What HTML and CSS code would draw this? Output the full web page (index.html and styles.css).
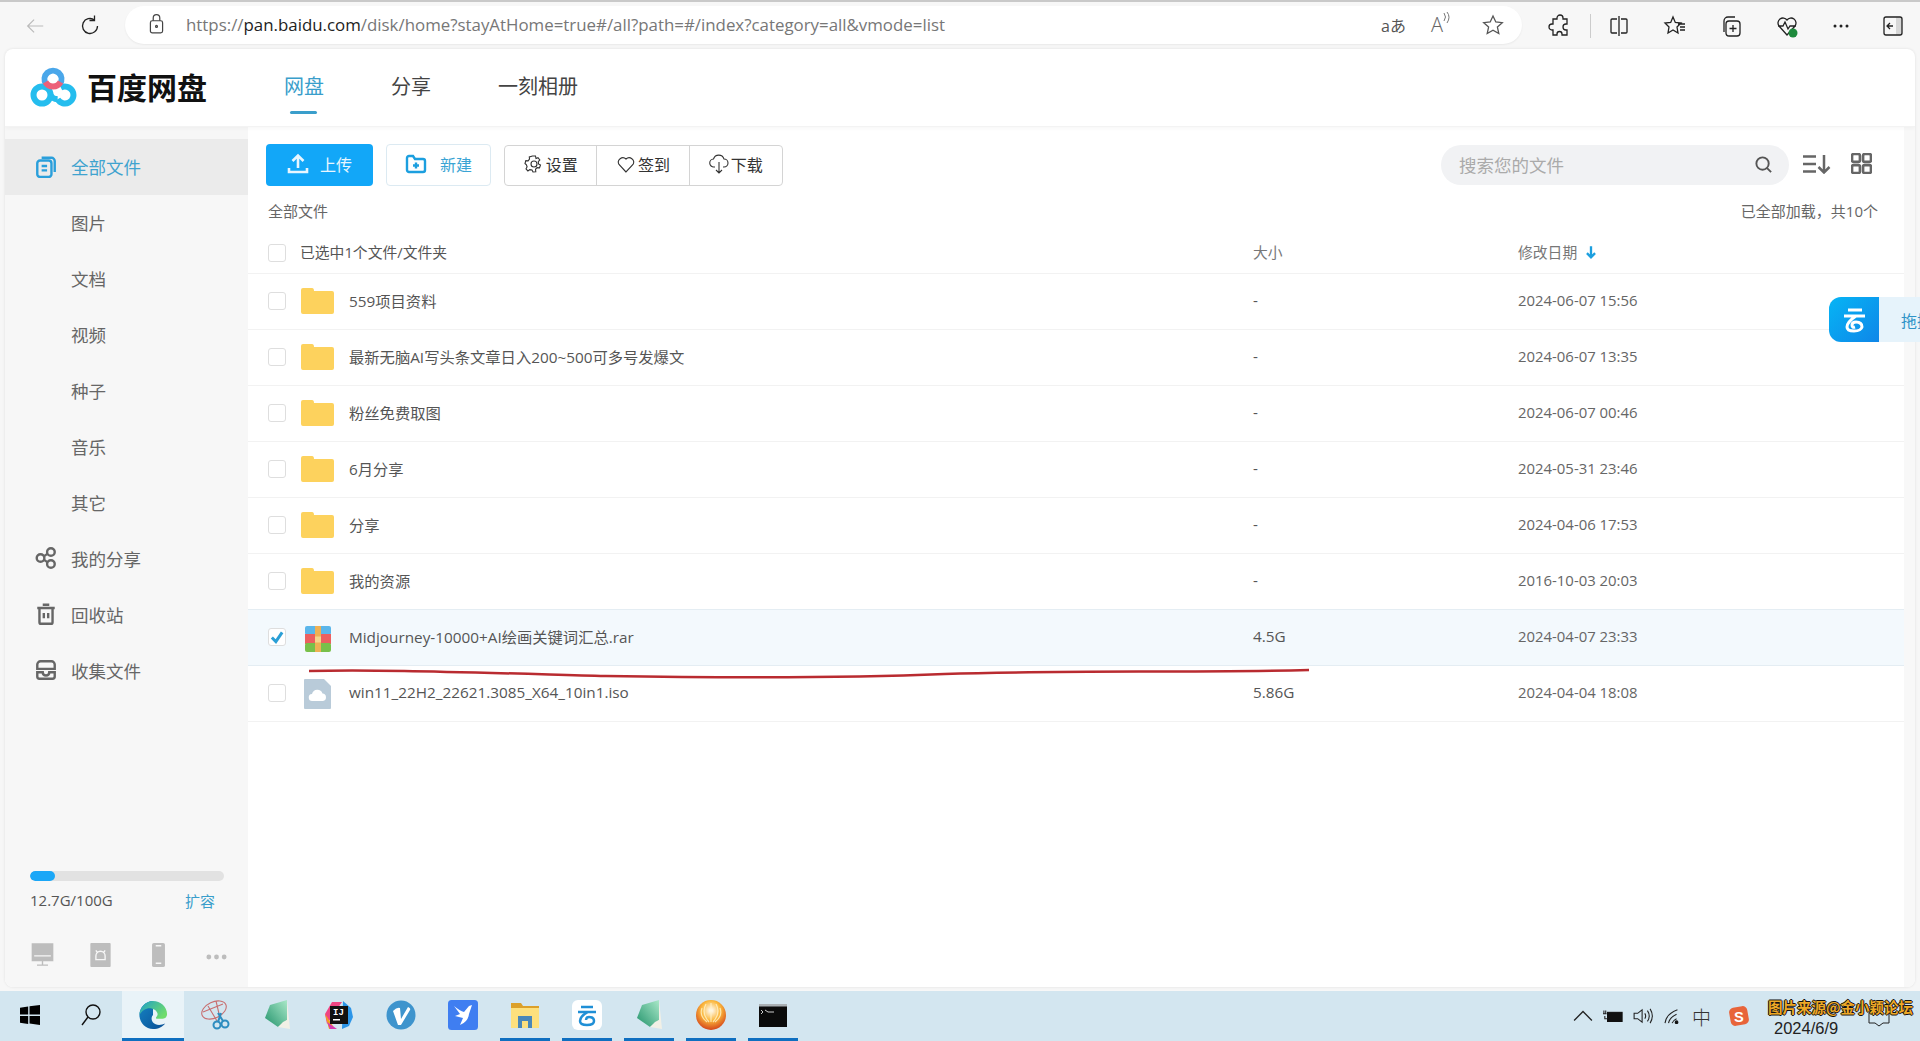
FILE: index.html
```html
<!DOCTYPE html>
<html lang="zh-CN">
<head>
<meta charset="utf-8">
<title>百度网盘</title>
<link rel="stylesheet" href="styles.css">
</head>
<body>
<div class="browser">
  <svg class="bicon back" viewBox="0 0 24 24"><path d="M21 12H4M11 5l-7 7 7 7"/></svg>
  <svg class="bicon reload" viewBox="0 0 24 24"><path d="M19.500 12a7.500 7.500 0 1 1-3-6M16.500 1.500V6.500H11.500"/></svg>
  <div class="address">
    <svg class="lock" viewBox="0 0 16 22"><rect x="1.500" y="7" width="13" height="13" rx="2"/><path d="M4.500 7V4a3.500 3.500 0 0 1 7 0v3"/><circle cx="8" cy="13" r="1"/></svg>
    <div class="url">https://<b>pan.baidu.com</b>/disk/home?stayAtHome=true#/all?path=#/index?category=all&amp;vmode=list</div>
    <div class="addr-tools">
      <span class="translate">aあ</span>
      <span class="read">A<svg viewBox="0 0 8 14"><path d="M1 2q3 4 0 8M4 1q4 5 0 11"/></svg></span>
      <svg class="bicon" viewBox="0 0 24 24"><path d="M12 3l2.800 6 6.500.7-4.900 4.400 1.400 6.400L12 17.200 6.200 20.500l1.400-6.400L2.700 9.700l6.500-.7z"/></svg>
    </div>
  </div>
  <div class="browser-tools">
    <svg class="bicon" viewBox="0 0 24 24"><path d="M9 4a3 3 0 0 1 6 0v1h4v5h-1a3 3 0 0 0 0 6h1v5h-5v-1a2.500 2.500 0 0 0-5 0v1H5v-5H4a3 3 0 0 1 0-6h1V5h4z"/></svg>
    <span class="tool-sep"></span>
    <svg class="bicon" viewBox="0 0 24 24"><path d="M12 2v20M10 5H5a1 1 0 0 0-1 1v12a1 1 0 0 0 1 1h5M14 5h5a1 1 0 0 1 1 1v12a1 1 0 0 1-1 1h-5"/></svg>
    <svg class="bicon" viewBox="0 0 24 24"><path d="M10 3l2.300 5.500L18 9l-4 4 1 6-5-3-5 3 1-6-4-4 5.700-.5zM17 13h5M17 16h5M15 10h7"/></svg>
    <svg class="bicon" viewBox="0 0 24 24"><rect x="7" y="7" width="14" height="15" rx="3"/><path d="M14 11v7M10.500 14.500h7M5 18V7a4 4 0 0 1 4-4h7"/></svg>
    <svg class="bicon health" viewBox="0 0 24 24"><path d="M12 21L4 12a5 5 0 0 1 8-6 5 5 0 0 1 8 6l-8 9zM3 12h5l2-4 3 7 2-3h6"/><circle class="ok" cx="18" cy="19" r="4.500"/></svg>
    <svg class="bicon dots" viewBox="0 0 24 24"><circle cx="6" cy="12" r="1.500"/><circle cx="12" cy="12" r="1.500"/><circle cx="18" cy="12" r="1.500"/></svg>
    <svg class="bicon" viewBox="0 0 24 24"><rect x="3" y="3" width="18" height="18" rx="2"/><rect class="fill" x="15" y="3.500" width="6" height="17"/><path d="M12 12H6M9 9l-3 3 3 3"/></svg>
  </div>
</div>

<div class="card">
  <header class="top">
    <div class="logo">
      <svg class="logo-mark" viewBox="0 0 48 40">
        <circle class="ring-a" cx="12" cy="28" r="8.500"/>
        <path class="ring-e" d="M27.600 32.300A8.500 8.500 0 1 0 30.800 20.600"/>
        <path class="ring-e" d="M20.500 28q2 4 7.100 4.300"/>
        <path class="ring-b" d="M16 17A8.500 8.500 0 1 1 30 17"/>
        <path class="ring-d" d="M15.500 15A8.500 8.500 0 0 0 30.500 15"/>
      </svg>
      <span class="logo-text">百度网盘</span>
    </div>
    <nav class="tabs">
      <a class="tab active">网盘</a>
      <a class="tab">分享</a>
      <a class="tab">一刻相册</a>
    </nav>
  </header>

  <div class="body">
    <aside class="side">
      <ul class="nav">
        <li class="nav-item current"><svg class="nicon" viewBox="0 0 20 22"><path d="M6 3.500h9a3 3 0 0 1 3 3v10M4.500 6h8a2.500 2.500 0 0 1 2.500 2.500v10a2.500 2.500 0 0 1-2.500 2.500h-8A2.500 2.500 0 0 1 2 18.500v-10A2.500 2.500 0 0 1 4.500 6zM6 11h5M6 15h5"/></svg><span>全部文件</span></li>
        <li class="nav-item"><span class="nav-sub">图片</span></li>
        <li class="nav-item"><span class="nav-sub">文档</span></li>
        <li class="nav-item"><span class="nav-sub">视频</span></li>
        <li class="nav-item"><span class="nav-sub">种子</span></li>
        <li class="nav-item"><span class="nav-sub">音乐</span></li>
        <li class="nav-item"><span class="nav-sub">其它</span></li>
        <li class="nav-item"><svg class="nicon grey" viewBox="0 0 22 22"><circle cx="6" cy="11" r="3.500"/><circle cx="15.500" cy="5.500" r="3.500"/><circle cx="15.500" cy="16.500" r="3.500"/><path d="M9 9.500l3.500-2.500M9 12.500l3.500 2.500"/></svg><span>我的分享</span></li>
        <li class="nav-item"><svg class="nicon grey" viewBox="0 0 22 22"><path d="M3 5.500h16M8 2.500h6M5 5.500h12v13a1.500 1.500 0 0 1-1.500 1.500h-9A1.500 1.500 0 0 1 5 18.500zM9 10v5M13 10v5"/></svg><span>回收站</span></li>
        <li class="nav-item"><svg class="nicon grey" viewBox="0 0 22 22"><path d="M3 10V6a3 3 0 0 1 3-3h10a3 3 0 0 1 3 3v4zM3 13h5q0 3 3 3t3-3h5v4a2 2 0 0 1-2 2H5a2 2 0 0 1-2-2z"/></svg><span>收集文件</span></li>
      </ul>
      <div class="storage">
        <div class="bar"><div class="bar-fill" style="width:13%"></div></div>
        <div class="storage-line"><span>12.7G/100G</span><a class="expand">扩容</a></div>
        <div class="devices">
          <svg class="dev" viewBox="0 0 24 26"><path d="M1 1h22v18H1zM12 19v5M6 24h12"/><path class="cut" d="M3 14h18"/></svg>
          <svg class="dev" viewBox="0 0 22 26"><rect x="0" y="0" width="22" height="26" rx="1"/><path class="cut" d="M6 18v-4a5 5 0 0 1 10 0v4zM6 8l2 3M16 8l-2 3"/></svg>
          <svg class="dev" viewBox="0 0 16 26"><rect x="1" y="0" width="14" height="26" rx="2"/><path class="cut" d="M5 3h6M5 22h6"/></svg>
          <svg class="dev more" viewBox="0 0 24 8"><circle cx="4" cy="4" r="2.500"/><circle cx="12" cy="4" r="2.500"/><circle cx="20" cy="4" r="2.500"/></svg>
        </div>
      </div>
    </aside>

    <main class="main">
      <div class="toolbar">
        <button class="btn primary"><svg class="btn-ico" viewBox="0 0 22 22"><path d="M11 15V3M5.500 8L11 2.500 16.500 8M2 15v4h18v-4" /></svg>上传</button>
        <button class="btn outline"><svg class="btn-ico" viewBox="0 0 22 22"><path d="M2 5a2 2 0 0 1 2-2h4l2 3h8a2 2 0 0 1 2 2v9a2 2 0 0 1-2 2H4a2 2 0 0 1-2-2zM11 9.500v6M8 12.500h6"/></svg>新建</button>
        <div class="group">
          <button class="gbtn"><svg class="g-ico" viewBox="0 0 20 20"><path d="M8.500 2h3l.5 2.500 2-.8 1.800 2.200-1.500 1.800.2 2.300 2 1-1 2.800-2.400-.2-1.600 1.700.3 2.400-2.800.3-1-2.100-2.200-.3L3.900 17 2 15l1.100-2.200-.7-2L1 9.500l.8-2.800 2.300.2L5.500 5l-.2-2z"/><circle cx="10" cy="10" r="3"/></svg>设置</button>
          <button class="gbtn"><svg class="g-ico" viewBox="0 0 20 20"><path d="M10 18L3 10.500a4.500 4.500 0 0 1 7-5.500 4.500 4.500 0 0 1 7 5.500z"/></svg>签到</button>
          <button class="gbtn"><svg class="g-ico" viewBox="0 0 20 20"><path d="M6 13H5a4 4 0 0 1-.5-8A5.500 5.500 0 0 1 15 5a4 4 0 0 1 0 8h-1M10 8v11M7 16l3 3 3-3"/></svg>下载</button>
        </div>
        <div class="tool-right">
          <div class="search">
            <span class="placeholder">搜索您的文件</span>
            <svg class="search-ico" viewBox="0 0 20 20"><circle cx="9" cy="9" r="6.500"/><path d="M13.500 13.500L18 18"/></svg>
          </div>
          <svg class="view-ico sort" viewBox="0 0 30 20"><path d="M1 2.500h13M1 10h13M1 17.500h13M22 1v17.500M16.500 13L22 18.500 27.500 13"/></svg>
          <svg class="view-ico grid-ico" viewBox="0 0 20 20"><rect x="1" y="1" width="7.500" height="7.500" rx="1.500"/><rect x="11.500" y="1" width="7.500" height="7.500" rx="1.500"/><rect x="1" y="11.500" width="7.500" height="7.500" rx="1.500"/><rect x="11.500" y="11.500" width="7.500" height="7.500" rx="1.500"/></svg>
        </div>
      </div>

      <div class="crumbs"><span>全部文件</span><span>已全部加载，共10个</span></div>

      <div class="table">
        <div class="row head">
          <span class="check"></span>
          <span class="head-name">已选中1个文件/文件夹</span>
          <span class="muted">大小</span>
          <span class="muted">修改日期<svg class="sort-arrow" viewBox="0 0 10 12"><path d="M5 1v9M1.500 7L5 10.500 8.500 7"/></svg></span>
        </div>
        <div class="row"><span class="check"></span><svg class="folder" viewBox="0 0 34 26"><path d="M1 2a2 2 0 0 1 2-2h9q2 0 2 3h18a2 2 0 0 1 2 2v19a2 2 0 0 1-2 2H3a2 2 0 0 1-2-2z"/></svg><span class="cell">559项目资料</span><span class="cell">-</span><span class="cell date">2024-06-07 15:56</span></div>
        <div class="row"><span class="check"></span><svg class="folder" viewBox="0 0 34 26"><path d="M1 2a2 2 0 0 1 2-2h9q2 0 2 3h18a2 2 0 0 1 2 2v19a2 2 0 0 1-2 2H3a2 2 0 0 1-2-2z"/></svg><span class="cell">最新无脑AI写头条文章日入200~500可多号发爆文</span><span class="cell">-</span><span class="cell date">2024-06-07 13:35</span></div>
        <div class="row"><span class="check"></span><svg class="folder" viewBox="0 0 34 26"><path d="M1 2a2 2 0 0 1 2-2h9q2 0 2 3h18a2 2 0 0 1 2 2v19a2 2 0 0 1-2 2H3a2 2 0 0 1-2-2z"/></svg><span class="cell">粉丝免费取图</span><span class="cell">-</span><span class="cell date">2024-06-07 00:46</span></div>
        <div class="row"><span class="check"></span><svg class="folder" viewBox="0 0 34 26"><path d="M1 2a2 2 0 0 1 2-2h9q2 0 2 3h18a2 2 0 0 1 2 2v19a2 2 0 0 1-2 2H3a2 2 0 0 1-2-2z"/></svg><span class="cell">6月分享</span><span class="cell">-</span><span class="cell date">2024-05-31 23:46</span></div>
        <div class="row"><span class="check"></span><svg class="folder" viewBox="0 0 34 26"><path d="M1 2a2 2 0 0 1 2-2h9q2 0 2 3h18a2 2 0 0 1 2 2v19a2 2 0 0 1-2 2H3a2 2 0 0 1-2-2z"/></svg><span class="cell">分享</span><span class="cell">-</span><span class="cell date">2024-04-06 17:53</span></div>
        <div class="row"><span class="check"></span><svg class="folder" viewBox="0 0 34 26"><path d="M1 2a2 2 0 0 1 2-2h9q2 0 2 3h18a2 2 0 0 1 2 2v19a2 2 0 0 1-2 2H3a2 2 0 0 1-2-2z"/></svg><span class="cell">我的资源</span><span class="cell">-</span><span class="cell date">2016-10-03 20:03</span></div>
        <div class="row selected">
          <span class="check on"><svg viewBox="0 0 14 14"><path d="M2.500 7.500L6 11l5.500-8"/></svg></span>
          <svg class="file-ico rar" viewBox="0 0 26 26">
            <rect class="rar-a" width="26" height="9" rx="2"/><rect class="rar-b" y="8" width="26" height="10"/><rect class="rar-c" y="17" width="26" height="9" rx="2"/><rect class="rar-d" x="10" width="6" height="26"/><rect class="rar-e" x="10" y="10.500" width="6" height="6"/>
          </svg>
          <span class="cell">Midjourney-10000+AI绘画关键词汇总.rar</span><span class="cell">4.5G</span><span class="cell date">2024-04-07 23:33</span>
        </div>
        <div class="row">
          <span class="check"></span>
          <svg class="file-ico iso" viewBox="0 0 27 30"><path class="iso-a" d="M0 1a1 1 0 0 1 1-1h19l7 7v22a1 1 0 0 1-1 1H1a1 1 0 0 1-1-1z"/><path class="iso-b" d="M8.500 22a3.500 3.500 0 0 1-.5-7 5.500 5.500 0 0 1 10.500-.5 3.800 3.800 0 0 1 .5 7.500z"/></svg>
          <span class="cell">win11_22H2_22621.3085_X64_10in1.iso</span><span class="cell">5.86G</span><span class="cell date">2024-04-04 18:08</span>
        </div>
      </div>
      <svg class="scribble" viewBox="0 0 1010 12" preserveAspectRatio="none"><path d="M2 3C60 1 150 4 300 8C420 10 540 10 640 6C760 2 880 5 1006 2"/></svg>
    </main>
    <div class="scroll-strip"></div>
  </div>
</div>

<div class="drag-tab">
  <div class="drag-icon">
    <svg viewBox="0 0 30 30"><path d="M9 5h14M5 11h21M17 11q-9 6-9 11 0 4 7 4t8-4q0-5-6-5-4 0-4 3t3 2"/></svg>
  </div>
  <span class="drag-text">拖拽</span>
</div>

<footer class="taskbar">
  <div class="task"><svg class="t-ico win" viewBox="0 0 22 22"><path d="M0 3l9-1.300V10.500H0zM10.500 1.500L22 0v10.500H10.500zM0 12h9v8.800L0 19.500zM10.500 12H22v10l-11.500-1.600z"/></svg></div>
  <div class="task"><svg class="t-ico search-t" viewBox="0 0 24 24"><circle cx="14" cy="9" r="7"/><path d="M9 14l-6 8"/></svg></div>
  <div class="task running active-task">
    <svg class="t-ico" viewBox="0 0 32 32">
      <defs>
        <linearGradient id="eb" x1="0" y1="0" x2="1" y2="1"><stop offset="0" stop-color="#1584c4"/><stop offset="1" stop-color="#0a4f96"/></linearGradient>
        <linearGradient id="eg" x1="0" y1="0" x2="1" y2=".6"><stop offset="0" stop-color="#1d9fc8"/><stop offset="1" stop-color="#6fdc6c"/></linearGradient>
      </defs>
      <path fill="url(#eb)" d="M16 1C8 1 1.500 8 1.500 16c0 8 6.500 15 14.500 15 6 0 10-2.500 13-6-4 2-10 2.500-13-1-2-2.500-2-6 0-8z"/>
      <path fill="url(#eg)" d="M16 1c8 0 15 6 15 14 0 3-2 5-5 5h-6c-1 0-1-1-.5-2 1-1 2-2.500 1-4.500C19 10 14 8 10 9 6 10 3 13 1.500 16 2 8 8 1 16 1z"/>
    </svg>
  </div>
  <div class="task">
    <svg class="t-ico scissors" viewBox="0 0 30 30"><ellipse cx="14" cy="10" rx="13" ry="8" transform="rotate(-25 14 10)"/><path d="M8 6l9 15M16 1l4 17M3 12l20-8"/><circle class="blue" cx="25" cy="24" r="3.500"/><circle class="blue" cx="17" cy="25" r="3.500"/><path class="blue" d="M18 13l5 8M21 13l-3 9"/></svg>
  </div>
  <div class="task"><svg class="t-ico pad" viewBox="0 0 28 30"><defs><linearGradient id="pg" x1="0" y1="1" x2="1" y2="0"><stop offset="0" stop-color="#23936c"/><stop offset="1" stop-color="#a9e8c8"/></linearGradient></defs><path fill="url(#pg)" d="M1 18L6 5 23 0l0 20-9 7z"/><path fill="#f2f0e6" d="M23 0l3 29-12-2 5-5 4-2z"/></svg></div>
  <div class="task"><svg class="t-ico" viewBox="0 0 30 30"><path fill="#ef4583" d="M8 2h10L3 24 1 14z"/><path fill="#f59f1f" d="M1 14l10 15-6 0z"/><path fill="#d63bb0" d="M3 22l10 7H6z"/><path fill="#2b95e8" d="M19 1l8 7 2 9-4 9-7 3z"/><rect fill="#111" x="6" y="6" width="18" height="18"/><text class="ij" x="9" y="15">IJ</text><rect fill="#fff" x="9" y="19" width="7" height="1.500"/></svg></div>
  <div class="task"><svg class="t-ico" viewBox="0 0 30 30"><circle cx="15" cy="15" r="14.500" fill="#3e94cd"/><path fill="#fff" d="M7 11q4-4 7-3l1 11 7-12q3 1 2 3L15 25h-3z"/></svg></div>
  <div class="task"><svg class="t-ico" viewBox="0 0 30 30"><rect width="30" height="30" rx="3.500" fill="#3f7ef1"/><path fill="#fff" d="M6 6q6 5 10 6l5-6 3-1-3 9q-1 8-9 11l3-7-8-2 5-2z"/></svg></div>
  <div class="task running split"><svg class="t-ico" viewBox="0 0 30 26"><path fill="#dca02a" d="M1 1h10l2 3h16v6H1z"/><path fill="#fde07d" d="M1 6h28v20H1z"/><path fill="#4a87b8" d="M8 26V14h14v12h-4v-7h-6v7z"/></svg></div>
  <div class="task running"><svg class="t-ico" viewBox="0 0 30 30"><rect width="30" height="30" rx="6" fill="#fff"/><path class="cloud-s" d="M9 7h12M6 12h18M16 12q-8 4-8 9 0 4 7 4t7-4q0-4-5-4-3 0-3 3"/></svg></div>
  <div class="task running"><svg class="t-ico pad" viewBox="0 0 28 30"><path fill="url(#pg)" d="M1 18L6 5 23 0l0 20-9 7z"/><path fill="#f2f0e6" d="M23 0l3 29-12-2 5-5 4-2z"/></svg></div>
  <div class="task running"><svg class="t-ico" viewBox="0 0 30 30"><defs><radialGradient id="orb" cx=".5" cy=".35" r=".65"><stop offset="0" stop-color="#ffffff"/><stop offset=".5" stop-color="#fbb73b"/><stop offset="1" stop-color="#d4451a"/></radialGradient></defs><circle cx="15" cy="15" r="15" fill="url(#orb)"/><path class="orb-line" d="M15 3v19M10 4q-5 9 3 18M20 4q5 9-3 18M6 8q-3 8 5 14M24 8q3 8-5 14"/></svg></div>
  <div class="task running"><svg class="t-ico term-ico" viewBox="0 0 28 23"><rect width="28" height="23" fill="#0b0b0b"/><rect width="28" height="2.500" fill="#aab0b4"/><path class="term" d="M2 6l2 2-2 2M6 6l3 2h6"/></svg></div>

  <div class="tray">
    <svg class="tr-ico" viewBox="0 0 18 10"><path d="M1 9l8-8 8 8"/></svg>
    <svg class="tr-ico batt" viewBox="0 0 22 14"><rect class="solid" x="5" y="3" width="16" height="10"/><path d="M3 1v3M1 1v3M0 4.500h4M2 7v3h3"/></svg>
    <svg class="tr-ico" viewBox="0 0 22 18"><path d="M1 6h4l5-4v14l-5-4H1zM13 6q2 3 0 6M16 3q4 6 0 12M19 1q5 8 0 16"/></svg>
    <svg class="tr-ico" viewBox="0 0 22 18"><path d="M2 17Q3 7 16 2M6 17q1-6 9-10M10 17q1-3 5-5"/><circle class="solid" cx="15" cy="16" r="1.500"/></svg>
    <span class="ime">中</span>
    <svg class="sogou" viewBox="0 0 24 24"><rect x="2" y="2" width="20" height="20" rx="5" transform="rotate(-10 12 12)"/><text x="6.500" y="18">S</text></svg>
    <div class="clock">
      <span class="mark">图片来源@金小颖论坛</span>
      <span class="date-t">2024/6/9</span>
      <svg class="bubble" viewBox="0 0 22 14"><path d="M1 0v10h6l4 3 4-3h6V0"/></svg>
    </div>
  </div>
</footer>
</body>
</html>
```
FILE: styles.css
```css
* { box-sizing: border-box; }
html, body { margin: 0; padding: 0; }
body {
  width: 1920px;
  height: 1041px;
  overflow: hidden;
  display: flex;
  flex-direction: column;
  background: #f7f7f7;
  font-family: "Open Sans", "Noto Sans CJK SC", sans-serif;
  color: #555;
  position: relative;
}
ul { list-style: none; margin: 0; padding: 0; }
button { font: inherit; cursor: pointer; }

/* browser chrome */
.browser {
  height: 49px;
  flex: none;
  display: flex;
  align-items: center;
  border-top: 2px solid #c9c9c9;
  padding: 0 0 0 24px;
}
.bicon { width: 24px; height: 24px; fill: none; stroke: #222; stroke-width: 1.300; flex: none; }
.back { stroke: #bbb; margin-right: 32px; width: 22px; }
.reload { margin-right: 23px; }
.bicon .ok { fill: #1e8a3c; stroke: none; }
.bicon .fill { fill: #222; stroke: none; opacity: .15; }
.dots circle { fill: #222; stroke: none; }
.address {
  width: 1397px;
  height: 38px;
  flex: none;
  margin-top: -2px;
  background: #fff;
  border-radius: 19px;
  display: flex;
  align-items: center;
  padding: 0 17px 0 24px;
  box-shadow: 0 1px 2px rgba(0,0,0,.06);
}
.lock { width: 15px; height: 21px; fill: none; stroke: #444; stroke-width: 1.300; margin-right: 22px; flex: none; }
.url { font-size: 16.880px; color: #777; white-space: nowrap; }
.url b { font-weight: 400; color: #222; }
.addr-tools { margin-left: auto; display: flex; align-items: center; gap: 26px; }
.translate { font-size: 16px; color: #555; width: 24px; white-space: nowrap; }
.read { font-size: 20px; font-weight: 300; color: #666; display: flex; width: 24px; }
.read svg { width: 8px; height: 14px; fill: none; stroke: #777; }
.addr-tools .bicon { stroke: #555; }
.browser-tools { display: flex; align-items: center; margin-left: 26px; }
.browser-tools > .bicon { margin-right: 32px; }
.browser-tools > .bicon:first-child { margin-right: 18px; }
.browser-tools > .health { margin-right: 30px; }
.browser-tools > .dots { margin-right: 28px; }
.browser-tools > .bicon:last-child { margin-right: 0; }
.tool-sep { width: 1px; height: 24px; background: #ccc; margin-right: 16px; }

/* card */
.card {
  height: 938px;
  flex: none;
  margin: 0 5px 0 5px;
  background: #fff;
  border-radius: 8px;
  box-shadow: 0 0 3px rgba(0,0,0,.1);
  display: flex;
  flex-direction: column;
  overflow: hidden;
}
.top {
  height: 78px;
  flex: none;
  display: flex;
  align-items: center;
  border-bottom: 1px solid #f3f3f3;
  box-shadow: 0 2px 4px rgba(0,0,0,.03);
  position: relative;
}
.logo { display: flex; align-items: center; margin-left: 25px; gap: 10px; width: 254px; padding-bottom: 2px; }
.logo-mark { width: 48px; height: 40px; fill: none; }
.ring-a { stroke: #25bdee; stroke-width: 6; }
.ring-e { stroke: #25bdee; stroke-width: 6; }
.ring-b { stroke: #4aa7ea; stroke-width: 6; }
.ring-d { stroke: #ec6079; stroke-width: 6; }
.logo-text { font-size: 30px; font-weight: 700; color: #111; font-family: "Noto Sans CJK SC", sans-serif; line-height: 36px; margin-top: -2px; margin-left: -1px; }
.tabs { display: flex; gap: 67px; align-self: stretch; }
.tab { font-size: 20px; color: #444; display: flex; align-items: center; position: relative; padding-bottom: 5px; }
.tab.active { color: #3a9ecb; }
.tab.active::after {
  content: "";
  position: absolute;
  left: 6px; right: 7px; bottom: 12px;
  height: 3px;
  border-radius: 2px;
  background: #3a9ecb;
}

.body { flex: 1; display: flex; min-height: 0; }
.side {
  width: 243px;
  flex: none;
  background: #f7f7f7;
  display: flex;
  flex-direction: column;
  padding-top: 12px;
}
.nav-item {
  height: 56px;
  display: flex;
  align-items: center;
  padding: 0 0 2px 29px;
  font-size: 17.500px;
  color: #666;
  gap: 13px;
}
.nav-sub { margin-left: 37px; }
.nav-item.current { background: #ebebeb; color: #3fa3cf; }
.nicon { width: 24px; height: 24px; fill: none; stroke: #2a9fdb; stroke-width: 2.200; flex: none; }
.nicon.grey { stroke: #666; }
.storage { margin-top: auto; padding: 0 24px 20px 25px; }
.bar { height: 10px; background: #e2e2e2; border-radius: 5px; overflow: hidden; width: 194px; }
.bar-fill { height: 100%; background: #1ba7f7; border-radius: 5px; }
.storage-line { display: flex; justify-content: space-between; align-items: center; margin-top: 7px; font-size: 15px; color: #555; width: 185px; height: 24px; }
.expand { color: #3a9ecb; }
.devices { display: flex; align-items: center; margin-top: 31px; justify-content: space-between; width: 197px; margin-left: 1px; }
.dev { width: 23px; height: 24px; fill: #bdbdbd; stroke: none; }
.dev path:first-child:not(.cut) { fill: #bdbdbd; stroke: #bdbdbd; stroke-width: 1.500; }
.dev .cut { fill: none; stroke: #f7f7f7; stroke-width: 1.500; }
.dev.more { height: 8px; margin-top: 4px; }

.main { flex: 1; min-width: 0; position: relative; }
.toolbar { display: flex; align-items: center; padding: 17px 0 0 18px; height: 59px; }
.btn {
  height: 42px;
  border-radius: 4px;
  font-size: 16px;
  display: flex;
  align-items: center;
  justify-content: center;
  gap: 11px;
  padding: 0 0 2px;
}
.btn.primary { width: 107px; background: #12a7f8; color: #e8f6ff; border: 0; }
.btn.outline { width: 105px; margin-left: 13px; background: #fff; color: #3aa4d4; border: 1px solid #dceaf2; gap: 13px; }
.btn-ico { width: 22px; height: 22px; fill: none; stroke: currentColor; stroke-width: 2.600; }
.outline .btn-ico { stroke: #1c9fdf; stroke-width: 2.400; }
.group { display: flex; margin-left: 13px; border: 1px solid #d4d4d4; border-radius: 4px; height: 41px; }
.gbtn {
  width: 92.300px;
  background: none;
  border: 0;
  border-right: 1px solid #d4d4d4;
  color: #333;
  font-size: 16px;
  display: flex;
  align-items: center;
  justify-content: center;
  gap: 2px;
  padding: 0 0 2px;
}
.gbtn:last-child { border-right: 0; }
.g-ico { width: 20px; height: 20px; fill: none; stroke: #333; stroke-width: 1.100; }
.tool-right { margin-left: auto; display: flex; align-items: center; padding-right: 32px; }
.search {
  width: 348px;
  height: 40px;
  border-radius: 20px;
  background: #f1f2f4;
  display: flex;
  align-items: center;
  justify-content: space-between;
  padding: 0 16px 1px 18px;
  margin-right: 13px;
}
.placeholder { font-size: 17.500px; color: #aaa; padding-bottom: 1px; }
.search-ico { width: 19px; height: 19px; fill: none; stroke: #555; stroke-width: 2; }
.view-ico { fill: none; stroke: #666; stroke-width: 2.500; }
.sort { width: 30px; height: 20px; margin-right: 19px; margin-top: -2px; }
.grid-ico { width: 21px; height: 21px; margin-top: -3px; }

.crumbs {
  display: flex;
  justify-content: space-between;
  padding: 0 26px 3px 20px;
  font-size: 15px;
  color: #666;
  height: 26px;
  align-items: center;
  margin-top: 13px;
}
.table { margin-top: 9px; }
.row {
  display: grid;
  grid-template-columns: 32px 49px 904px 265px 1fr;
  align-items: center;
  height: 56px;
  padding: 0 0 2px 20px;
  border-bottom: 1px solid #f2f2f2;
  font-size: 15px;
  color: #555;
  white-space: nowrap;
}
.row.head { height: 40px; padding-bottom: 1px; }
.head-name { grid-column: 2 / 4; font-size: 14.800px; padding-bottom: 3px; }
.cell { font-size: 15.300px; padding-bottom: 1px; }
.muted { color: #777; display: flex; align-items: center; gap: 8px; padding-bottom: 3px; font-size: 14.800px; }
.cell.date { color: #666; font-size: 14.900px; }
.sort-arrow { width: 12px; height: 14px; fill: none; stroke: #1c9fdf; stroke-width: 2; }
.row.selected { background: #f3f9fd; border-bottom-color: #e4edf3; box-shadow: 0 -1px 0 #e4edf3; }
.check {
  width: 18px;
  height: 18px;
  border: 1px solid #dedede;
  border-radius: 3px;
  background: #fff;
  display: block;
}
.check svg { display: block; width: 16px; height: 16px; fill: none; stroke: #2a9fd6; stroke-width: 2.600; }
.folder { width: 34px; height: 26px; fill: #fdd25d; }
.file-ico { width: 26px; height: 26px; margin-left: 5px; margin-top: 4px; }
.file-ico.iso { height: 30px; width: 27px; margin-left: 4px; margin-top: 2px; }
.rar-a { fill: #5bb6ea; } .rar-b { fill: #ec5f5f; } .rar-c { fill: #79c04a; } .rar-d { fill: #efb154; } .rar-e { fill: #f6d58a; }
.iso-a { fill: #b9cbd9; } .iso-b { fill: #fff; }
.scribble {
  position: absolute;
  left: 59px; top: 541px;
  width: 1006px; height: 12px;
  fill: none; stroke: #b92b30; stroke-width: 2.500;
}
.scroll-strip { width: 11px; flex: none; background: #f8f8f8; }

/* floating drag tab */
.drag-tab {
  position: absolute;
  left: 1829px; top: 297px;
  width: 91px; height: 45px;
  display: flex;
  align-items: center;
  background: #e6f3fb;
  border-radius: 12px 0 0 12px;
  overflow: hidden;
}
.drag-icon {
  width: 50px; height: 45px;
  flex: none;
  background: linear-gradient(135deg, #06b5f5, #0f86e8);
  display: flex; align-items: center; justify-content: center;
}
.drag-icon svg { width: 30px; height: 30px; fill: none; stroke: #fff; stroke-width: 3; }
.drag-text { font-size: 16px; color: #2f93c8; margin-left: 22px; white-space: nowrap; flex: none; }

/* taskbar */
.taskbar {
  flex: 1;
  margin-top: 4px;
  background: #d3e6f0;
  display: flex;
  align-items: flex-start;
}
.task { width: 62px; height: 50px; padding-bottom: 2px; display: flex; align-items: center; justify-content: center; position: relative; flex: none; }
.task:first-child { width: 60px; }
.t-ico { width: 30px; height: 30px; }
.win { width: 20px; height: 20px; fill: #000; }
.search-t { width: 24px; height: 24px; fill: none; stroke: #111; stroke-width: 1.400; }
.active-task { background: #e9f3f8; }
.running::after {
  content: "";
  position: absolute;
  left: 6px; right: 6px; bottom: 0;
  height: 3px;
  background: #0f6fc0;
}
.active-task::after { left: 0; right: 0; }
.scissors { fill: none; stroke: #c86f70; stroke-width: 1.100; }
.scissors .blue { stroke: #2d8dc0; stroke-width: 2; }
.pad { margin-left: 2px; }
.ij { font-size: 9px; font-weight: 700; fill: #fff; font-family: "Liberation Mono", monospace; }
.cloud-s { fill: none; stroke: #1f8fd6; stroke-width: 2.500; }
.orb-line { fill: none; stroke: #fff3c8; stroke-width: 1.200; opacity: .8; }
.term { fill: none; stroke: #ccc; stroke-width: 1; }
.term-ico { width: 28px; height: 23px; }
.tray { margin-left: auto; display: flex; align-items: center; gap: 10px; height: 50px; color: #111; }
.tr-ico { width: 20px; height: 16px; fill: none; stroke: #222; stroke-width: 1.200; }
.tr-ico .solid { fill: #111; stroke: #111; }
.ime { font-size: 19px; font-family: "Noto Sans CJK SC", sans-serif; font-weight: 300; color: #333; width: 20px; margin-left: -1px; }
.sogou { width: 22px; height: 22px; margin-left: 6px; }
.sogou rect { fill: #e8643a; }
.sogou text { font-size: 16px; font-weight: 700; fill: #fff; font-family: "Liberation Sans", sans-serif; }
.clock { width: 152px; height: 50px; position: relative; margin-left: 8px; }
.mark {
  position: absolute;
  left: 0; top: 5px;
  font-size: 14.500px;
  font-weight: 700;
  color: #eda826;
  white-space: nowrap;
  font-family: "Noto Sans CJK SC", sans-serif;
  text-shadow: 1px 0 0 #111, -1px 0 0 #111, 0 1px 0 #111, 0 -1px 0 #111;
  z-index: 1;
}
.date-t { position: absolute; left: 6px; top: 28px; font-size: 16.500px; color: #222; font-family: "Liberation Sans", sans-serif; }
.bubble { position: absolute; left: 100px; top: 22px; width: 22px; height: 14px; fill: none; stroke: #222; stroke-width: 1; }
```
